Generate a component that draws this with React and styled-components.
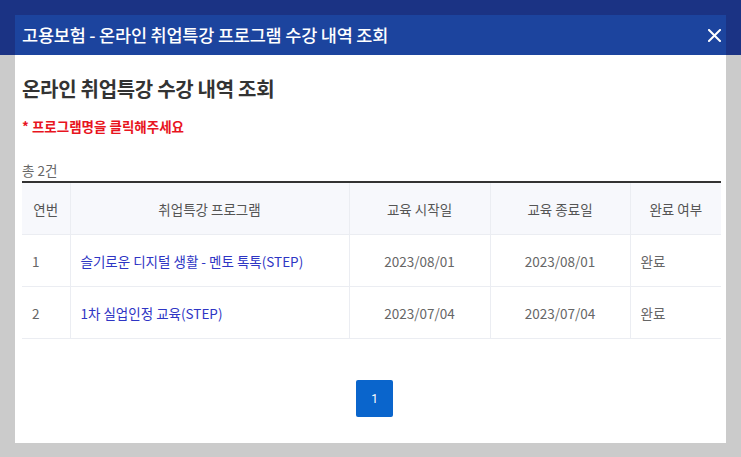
import React from "react";
import styled, { createGlobalStyle } from "styled-components";

const GlobalStyle = createGlobalStyle`
  html, body {
    margin: 0;
    padding: 0;
  }
  body {
    background: linear-gradient(#1b3384 0, #1b3384 55px, #cbcbcb 55px);
    min-height: 457px;
    font-family: "Noto Sans CJK KR", "Noto Sans", sans-serif;
  }
`;

const rows = [
  { no: 1, title: "슬기로운 디지털 생활 - 멘토 톡톡(STEP)", start: "2023/08/01", end: "2023/08/01", done: "완료" },
  { no: 2, title: "1차 실업인정 교육(STEP)", start: "2023/07/04", end: "2023/07/04", done: "완료" },
];

const App = () => {
  return (
    <>
      <GlobalStyle />
      <Backdrop>
        <Modal>
          <Header>
            <HeaderTitle>고용보험 - 온라인 취업특강 프로그램 수강 내역 조회</HeaderTitle>
            <CloseButton aria-label="닫기">
              <svg width="13" height="13" viewBox="0 0 13 13">
                <path d="M1 1L12 12M12 1L1 12" stroke="#fff" strokeWidth="2" strokeLinecap="square" />
              </svg>
            </CloseButton>
          </Header>
          <Body>
            <Title>온라인 취업특강 수강 내역 조회</Title>
            <Notice>* 프로그램명을 클릭해주세요</Notice>
            <Count>총 2건</Count>
            <Table>
              <colgroup>
                <col style={{ width: "48px" }} />
                <col style={{ width: "279px" }} />
                <col style={{ width: "141px" }} />
                <col style={{ width: "140px" }} />
                <col />
              </colgroup>
              <thead>
                <tr>
                  <Th>연번</Th>
                  <Th>취업특강 프로그램</Th>
                  <Th>교육 시작일</Th>
                  <Th>교육 종료일</Th>
                  <Th>완료 여부</Th>
                </tr>
              </thead>
              <tbody>
                {rows.map((r) => (
                  <tr key={r.no}>
                    <Td>{r.no}</Td>
                    <Td>
                      <ProgramLink href="#">{r.title}</ProgramLink>
                    </Td>
                    <Td $center>{r.start}</Td>
                    <Td $center>{r.end}</Td>
                    <Td>{r.done}</Td>
                  </tr>
                ))}
              </tbody>
            </Table>
            <Pagination>
              <PageButton $active>1</PageButton>
            </Pagination>
          </Body>
        </Modal>
      </Backdrop>
    </>
  );
};

export default App;

const Backdrop = styled.div`
  padding: 15px;
`;

const Modal = styled.div`
  width: 711px;
  background: #fff;
`;

const Header = styled.div`
  height: 40px;
  background: #1c449e;
  display: flex;
  align-items: center;
  justify-content: space-between;
  padding: 0 0 0 7px;
`;

const HeaderTitle = styled.h1`
  margin: 0;
  color: #fff;
  font-size: 17.5px;
  font-weight: 500;
  line-height: 24px;
  letter-spacing: -0.2px;
`;

const CloseButton = styled.button`
  width: 24px;
  height: 24px;
  border: 0;
  padding: 0;
  background: transparent;
  display: flex;
  align-items: center;
  justify-content: center;
  cursor: pointer;
`;

const Body = styled.div`
  padding: 20px 5px 26px 7px;
`;

const Title = styled.h2`
  margin: 0;
  font-size: 20px;
  line-height: 28px;
  font-weight: 700;
  color: #333;
  letter-spacing: -0.3px;
`;

const Notice = styled.p`
  margin: 14px 0 0;
  font-size: 13.5px;
  line-height: 18px;
  font-weight: 700;
  color: #e8141e;
`;

const Count = styled.p`
  margin: 26px 0 0;
  font-size: 13.5px;
  line-height: 18px;
  color: #666;
`;

const Table = styled.table`
  width: 100%;
  margin-top: 2px;
  border-collapse: collapse;
  border-top: 2px solid #333;
  table-layout: fixed;
  font-size: 13.5px;
  color: #666;
`;

const Th = styled.th`
  height: 51px;
  padding: 0;
  background: #f7f8fc;
  font-weight: 400;
  color: #555;
  text-align: center;
  border-left: 1px solid #ebedf2;
  border-bottom: 1px solid #ebedf2;
  &:first-child {
    border-left: 0;
  }
`;

const Td = styled.td`
  height: 51px;
  padding: 0 10px;
  text-align: ${(p) => (p.$center ? "center" : "left")};
  border-left: 1px solid #ebedf2;
  border-bottom: 1px solid #ebedf2;
  &:first-child {
    border-left: 0;
  }
`;

const ProgramLink = styled.a`
  color: #2e35c4;
  text-decoration: none;
`;

const Pagination = styled.div`
  margin-top: 41px;
  display: flex;
  justify-content: center;
  padding-left: 6px;
`;

const PageButton = styled.span`
  width: 37px;
  height: 37px;
  border-radius: 2px;
  display: flex;
  align-items: center;
  justify-content: center;
  background: ${(p) => (p.$active ? "#0a65cc" : "#fff")};
  color: ${(p) => (p.$active ? "#fff" : "#333")};
  font-size: 12px;
  font-family: Roboto, "Noto Sans", sans-serif;
`;
